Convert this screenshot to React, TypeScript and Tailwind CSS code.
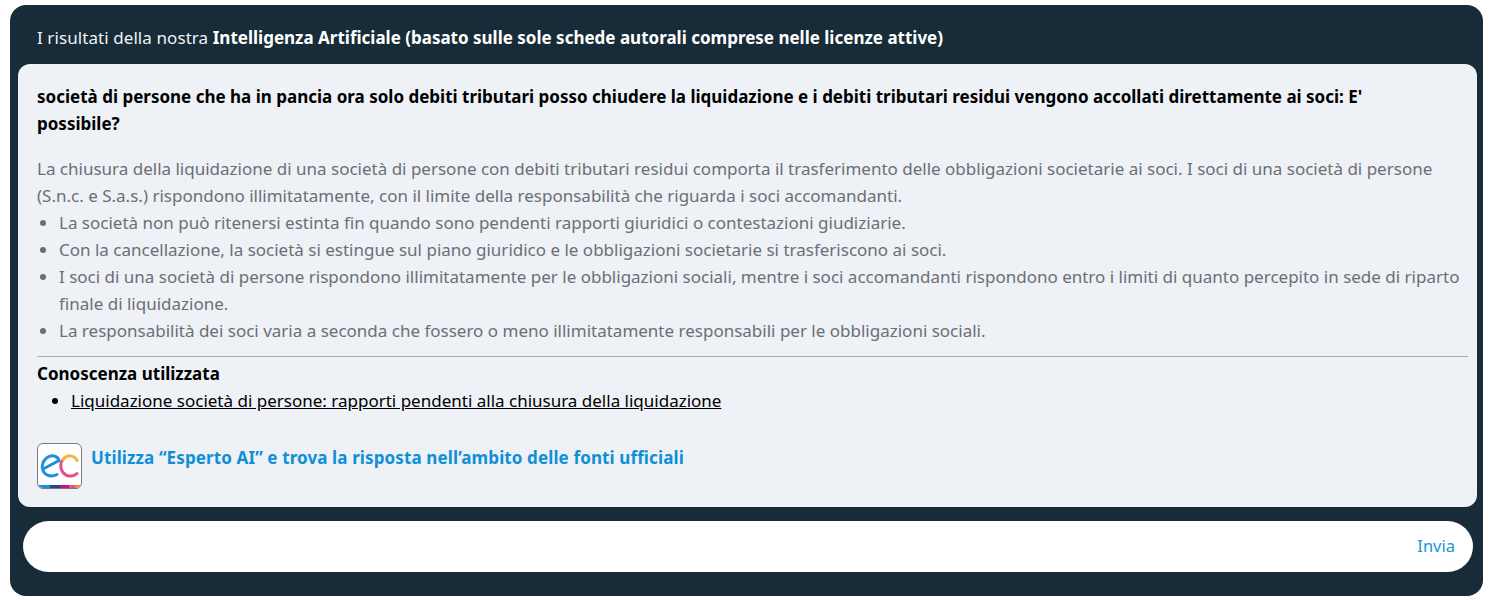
export default function App() {
  return (
    <div className="bg-white h-[600px] pt-[5px] pl-[10px] pr-[7px] font-['Noto_Sans',sans-serif]">
      <div className="bg-[#172c38] rounded-[16px] h-[591px] pl-[8px] pr-[6px]">
        <div className="h-[59px] pl-[19px] pt-[21px] text-[17px] leading-[24px] text-[#f0f2f5]">
          <span className="tracking-[0.08px]">I risultati della nostra </span><b className="font-bold text-white">Intelligenza Artificiale (basato sulle sole schede autorali comprese nelle licenze attive)</b>
        </div>
        <div className="bg-[#eef1f6] rounded-[12px] h-[443px] px-[19px] pt-[19px] pr-[9px] text-[17px] leading-[27px]">
          <p className="font-bold text-black pr-[30px]">società di persone che ha in pancia ora solo debiti tributari posso chiudere la liquidazione e i debiti tributari residui vengono accollati direttamente ai soci: E' possibile?</p>
          <div className="mt-[18px] text-[#6b6f75]">
            <p>La chiusura della liquidazione di una società di persone con debiti tributari residui comporta il trasferimento delle obbligazioni societarie ai soci. I soci di una società di persone (S.n.c. e S.a.s.) rispondono illimitatamente, con il limite della responsabilità che riguarda i soci accomandanti.</p>
            <ul className="list-disc pl-[22px]">
              <li>La società non può ritenersi estinta fin quando sono pendenti rapporti giuridici o contestazioni giudiziarie.</li>
              <li>Con la cancellazione, la società si estingue sul piano giuridico e le obbligazioni societarie si trasferiscono ai soci.</li>
              <li>I soci di una società di persone rispondono illimitatamente per le obbligazioni sociali, mentre i soci accomandanti rispondono entro i limiti di quanto percepito in sede di riparto finale di liquidazione.</li>
              <li>La responsabilità dei soci varia a seconda che fossero o meno illimitatamente responsabili per le obbligazioni sociali.</li>
            </ul>
          </div>
          <div className="mt-[12px] border-t border-[#a9adb3] pt-[3px] text-black">
            <div className="font-bold">Conoscenza utilizzata</div>
            <ul className="list-disc pl-[34px]">
              <li><a className="underline">Liquidazione società di persone: rapporti pendenti alla chiusura della liquidazione</a></li>
            </ul>
          </div>
          <div className="mt-[29px] flex items-start gap-[9px]">
            <div className="w-[45px] h-[46px] shrink-0 rounded-[6px] border border-[#77797c] bg-white overflow-hidden flex flex-col">
              <svg viewBox="0 0 43 40" className="w-[43px] h-[41px]">
                <path d="M6 24 L21 16 C20 12 15 10 11 12 C5 15 3 21 5 26 C7 31 13 33 19 30" fill="none" stroke="#1f8fd6" strokeWidth="3" strokeLinecap="round" />
                <path d="M39 29 C35 33 28 32 25 28 C22 24 22 18 25 15" fill="none" stroke="#ea4c89" strokeWidth="3" strokeLinecap="round" />
                <path d="M25 15 C29 10 36 10 39 16" fill="none" stroke="#f7b23b" strokeWidth="3" strokeLinecap="round" />
              </svg>
              <div className="flex h-[3px] mt-auto">
                <div className="flex-[4] bg-[#1b8ed6]" />
                <div className="flex-[3] bg-[#1c4b8c]" />
                <div className="flex-[3] bg-[#c2187c]" />
                <div className="flex-[2] bg-[#ea4c89]" />
                <div className="flex-[2] bg-[#f08a3c]" />
              </div>
            </div>
            <a className="font-bold text-[#0f8fd6] leading-[27px] mt-[1px] tracking-[0.12px]">Utilizza “Esperto AI” e trova la risposta nell’ambito delle fonti ufficiali</a>
          </div>
        </div>
        <div className="mt-[14px] ml-[5px] mr-[4px] h-[51px] bg-white rounded-full flex items-center justify-end pr-[18px] text-[16.5px] text-[#1a94d8]">
          Invia
        </div>
      </div>
    </div>
  );
}
